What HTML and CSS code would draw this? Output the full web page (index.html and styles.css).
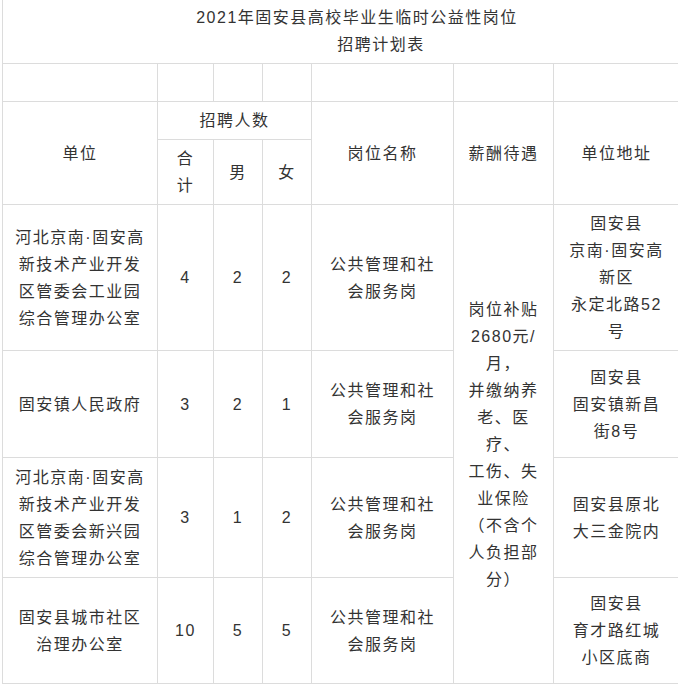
FILE: index.html
```html
<!DOCTYPE html>
<html lang="zh-CN">
<head>
<meta charset="utf-8">
<title>2021年固安县高校毕业生临时公益性岗位招聘计划表</title>
<link rel="stylesheet" href="styles.css">
</head>
<body>
<table class="plan">
  <colgroup>
    <col class="c-unit">
    <col class="c-total">
    <col class="c-male">
    <col class="c-female">
    <col class="c-post">
    <col class="c-pay">
    <col class="c-addr">
  </colgroup>
  <tbody>
    <tr class="r-title">
      <td class="title" colspan="7">
        <span class="t1">2021年固安县高校毕业生临时公益性岗位</span>
        <span class="t2">招聘计划表</span>
      </td>
    </tr>
    <tr class="r-empty">
      <td></td><td></td><td></td><td></td><td></td><td></td><td></td>
    </tr>
    <tr class="r-h1">
      <td rowspan="2">单位</td>
      <td colspan="3">招聘人数</td>
      <td rowspan="2">岗位名称</td>
      <td rowspan="2">薪酬待遇</td>
      <td rowspan="2">单位地址</td>
    </tr>
    <tr class="r-h2">
      <td>合计</td>
      <td>男</td>
      <td>女</td>
    </tr>
    <tr class="r-1">
      <td>河北京南·固安高新技术产业开发区管委会工业园综合管理办公室</td>
      <td>4</td>
      <td>2</td>
      <td>2</td>
      <td>公共管理和社会服务岗</td>
      <td rowspan="4" class="pay">岗位补贴<br>2680元/<br>月，<br>并缴纳养<br>老、医<br>疗、<br>工伤、失<br>业保险<br>（不含个<br>人负担部<br>分）</td>
      <td>固安县<br>京南·固安高新区<br>永定北路52号</td>
    </tr>
    <tr class="r-2">
      <td>固安镇人民政府</td>
      <td>3</td>
      <td>2</td>
      <td>1</td>
      <td>公共管理和社会服务岗</td>
      <td>固安县<br>固安镇新昌街8号</td>
    </tr>
    <tr class="r-3">
      <td>河北京南·固安高新技术产业开发区管委会新兴园综合管理办公室</td>
      <td>3</td>
      <td>1</td>
      <td>2</td>
      <td>公共管理和社会服务岗</td>
      <td>固安县原北大三金院内</td>
    </tr>
    <tr class="r-4">
      <td>固安县城市社区治理办公室</td>
      <td>10</td>
      <td>5</td>
      <td>5</td>
      <td>公共管理和社会服务岗</td>
      <td>固安县<br>育才路红城小区底商</td>
    </tr>
  </tbody>
</table>
</body>
</html>
```
FILE: styles.css
```css
html, body {
  margin: 0;
  padding: 0;
  background: #ffffff;
}

body {
  padding-left: 2px;
  font-family: "Liberation Sans", "Noto Sans CJK SC", sans-serif;
  font-size: 16px;
  color: #333333;
}

.plan {
  border-collapse: collapse;
  table-layout: fixed;
  width: 677px;
}

.c-unit { width: 155px; }
.c-total { width: 56px; }
.c-male { width: 49px; }
.c-female { width: 49px; }
.c-post { width: 142px; }
.c-pay { width: 100px; }
.c-addr { width: 126px; }

.plan td {
  border: 1px solid #dcdcdc;
  padding: 5px 11px;
  text-align: center;
  vertical-align: middle;
  line-height: 27px;
  letter-spacing: 1.5px;
  word-break: normal;
}

.plan td.title {
  border-top: 0;
  padding: 4px 0 5px;
}

.t1,
.t2 {
  display: block;
}

.t1 { padding-left: 32px; }
.t2 { padding-left: 80px; }

.r-title { height: 62px; }
.r-empty { height: 38px; }
.r-h1 { height: 38px; }
.r-h2 { height: 65px; }
.r-1 { height: 146px; }
.r-2 { height: 107px; }
.r-3 { height: 120px; }
.r-4 { height: 106px; }
```
